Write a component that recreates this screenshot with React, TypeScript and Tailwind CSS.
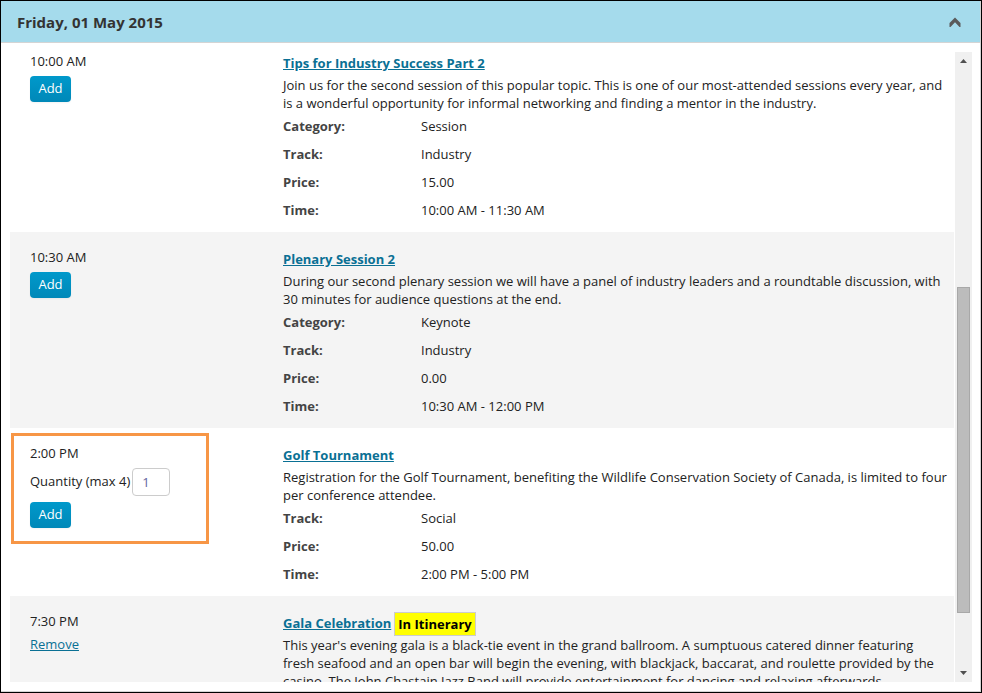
import { useState } from "react";

type Session = {
  id: string;
  time: string;
  title: string;
  description: string;
  details: [string, string][];
  maxQuantity?: number;
  inItinerary?: boolean;
};

const sessions: Session[] = [
  {
    id: "tips",
    time: "10:00 AM",
    title: "Tips for Industry Success Part 2",
    description:
      "Join us for the second session of this popular topic. This is one of our most-attended sessions every year, and is a wonderful opportunity for informal networking and finding a mentor in the industry.",
    details: [
      ["Category:", "Session"],
      ["Track:", "Industry"],
      ["Price:", "15.00"],
      ["Time:", "10:00 AM - 11:30 AM"],
    ],
  },
  {
    id: "plenary",
    time: "10:30 AM",
    title: "Plenary Session 2",
    description:
      "During our second plenary session we will have a panel of industry leaders and a roundtable discussion, with 30 minutes for audience questions at the end.",
    details: [
      ["Category:", "Keynote"],
      ["Track:", "Industry"],
      ["Price:", "0.00"],
      ["Time:", "10:30 AM - 12:00 PM"],
    ],
  },
  {
    id: "golf",
    time: "2:00 PM",
    title: "Golf Tournament",
    description:
      "Registration for the Golf Tournament, benefiting the Wildlife Conservation Society of Canada, is limited to four per conference attendee.",
    details: [
      ["Track:", "Social"],
      ["Price:", "50.00"],
      ["Time:", "2:00 PM - 5:00 PM"],
    ],
    maxQuantity: 4,
  },
  {
    id: "gala",
    time: "7:30 PM",
    title: "Gala Celebration",
    description:
      "This year's evening gala is a black-tie event in the grand ballroom. A sumptuous catered dinner featuring fresh\u00a0seafood and an open bar will begin the evening, with blackjack, baccarat, and roulette provided by the casino. The John Chastain Jazz Band will provide entertainment for dancing and relaxing afterwards.",
    details: [],
    inItinerary: true,
  },
];

function AddButton() {
  return (
    <button
      type="button"
      className="block h-[26px] w-[41px] rounded bg-linear-to-b from-[#0099cb] to-[#0088b8] pb-0.5 text-center leading-[18px] text-white shadow-xs"
    >
      Add
    </button>
  );
}

function Actions({ session }: { session: Session }) {
  const [quantity, setQuantity] = useState("1");

  if (session.inItinerary) {
    return (
      <a href="#remove" className="mt-[5px] inline-block text-[#0a7094] underline">
        Remove
      </a>
    );
  }

  if (session.maxQuantity) {
    return (
      <div className="mt-1.5 space-y-1.5">
        <div className="flex h-7 items-center gap-0.5">
          <label htmlFor={session.id} className="pb-0.5">
            Quantity (max {session.maxQuantity})
          </label>
          <input
            id={session.id}
            type="text"
            value={quantity}
            onChange={(e) => setQuantity(e.target.value)}
            className="h-7 w-[38px] rounded border border-[#ccc] bg-white px-[9px] text-[#6464a0] outline-none"
          />
        </div>
        <AddButton />
      </div>
    );
  }

  return (
    <div className="mt-1.5">
      <AddButton />
    </div>
  );
}

function SessionRow({ session }: { session: Session }) {
  return (
    <li className="relative flex shrink-0 pt-4 pr-1.5 pb-2 pl-5 first:pt-0 even:bg-[#f4f4f4]">
      {session.maxQuantity && (
        <div className="pointer-events-none absolute top-[5px] left-px h-[111px] w-[198px] border-3 border-[#f79646]" />
      )}
      <div className="w-[253px] shrink-0">
        <p>{session.time}</p>
        <Actions session={session} />
      </div>
      <div className="min-w-0 flex-1">
        <h3 className="flex h-6 items-start gap-[3px] leading-[22px] font-bold">
          <a href={`#${session.id}`} className="text-[#0a7094] underline">
            {session.title}
          </a>
          {session.inItinerary && (
            <span className="border border-[#ccc] bg-[#ff0] px-[3px] text-black">In Itinerary</span>
          )}
        </h3>
        <p>{session.description}</p>
        <dl>
          {session.details.map(([label, value]) => (
            <div key={label} className="flex h-7 items-center">
              <dt className="w-[138px] font-bold text-[#444]">{label}</dt>
              <dd>{value}</dd>
            </div>
          ))}
        </dl>
      </div>
    </li>
  );
}

function ScrollBar() {
  return (
    <div className="flex w-[17px] shrink-0 flex-col items-center bg-[#f0f0f0]" aria-hidden="true">
      <svg width="17" height="17" viewBox="0 0 17 17" fill="#505050">
        <path d="M5 11L8.5 7L12 11Z" />
      </svg>
      <div className="flex w-[13px] flex-1 flex-col">
        <div className="flex-[219]" />
        <div className="flex-[325] border border-[#a8a8a8] bg-[#bcbcbc]" />
        <div className="flex-[52]" />
      </div>
      <svg width="17" height="17" viewBox="0 0 17 17" fill="#505050">
        <path d="M5 6L12 6L8.5 10Z" />
      </svg>
    </div>
  );
}

export default function App() {
  const [open, setOpen] = useState(true);

  return (
    <div className="h-screen border border-black bg-white font-['Open_Sans',sans-serif] text-[13px] leading-[18px] text-[#222]">
      <section className="flex h-full flex-col border-r border-b border-[#d4d4d4]">
        <header className="flex h-[42px] shrink-0 items-center justify-between border-b border-[#d4d4d4] bg-[#a5dbec] px-4">
          <h2 className="text-[15px] leading-5 font-bold text-[#333]">Friday, 01 May 2015</h2>
          <button type="button" aria-label="Toggle day" onClick={() => setOpen(!open)}>
            <svg width="17" height="14" viewBox="0 0 17 14" fill="#5a5a5a">
              <path d="M8 2.5L13.5 8V12H12.5L8 7.2L3.5 12H2.5V8Z" />
            </svg>
          </button>
        </header>
        {open && (
          <div className="flex min-h-0 flex-1 gap-px py-[9px] pr-2 pl-[9px]">
            <ul className="flex min-w-0 flex-1 flex-col overflow-hidden">
              {sessions.map((session) => (
                <SessionRow key={session.id} session={session} />
              ))}
            </ul>
            <ScrollBar />
          </div>
        )}
      </section>
    </div>
  );
}
